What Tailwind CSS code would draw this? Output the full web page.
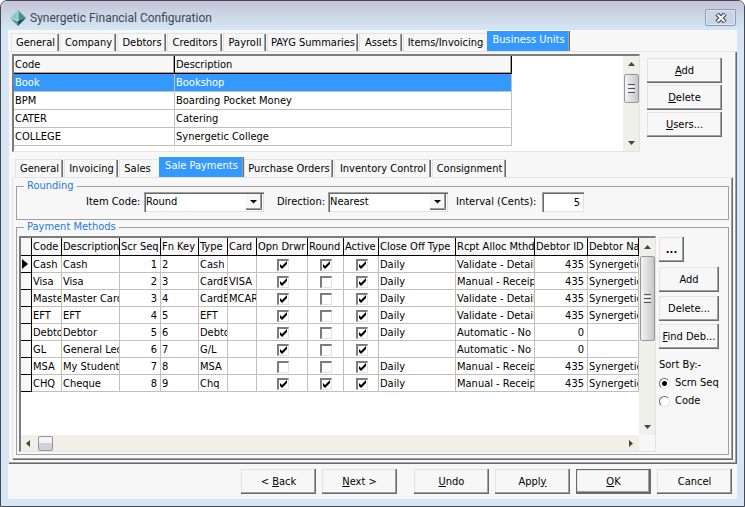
<!DOCTYPE html>
<html lang="en">
<head>
<meta charset="utf-8">
<meta name="viewport" content="width=device-width, initial-scale=1">
<title>Synergetic Financial Configuration</title>
<script src="https://cdn.jsdelivr.net/npm/@tailwindcss/browser@4"></script>
</head>
<body class="bg-white font-['DejaVu_Sans_Condensed','DejaVu_Sans',sans-serif] text-[11px] leading-[16px] text-black">
<div class="flex min-h-screen flex-col overflow-hidden rounded-t-[7px] border border-[#444850] bg-[#d6e6f6] px-[7px] pb-[7px]">

  <header class="-mx-[7px] flex h-[29px] items-center justify-between bg-linear-to-b from-[#c6c2da] via-[#ccd8e4] to-[#d6e6f6] pt-1 pr-2 pl-[9px]">
    <div class="flex items-center gap-1">
      <svg class="size-4" viewBox="0 0 16 16" aria-hidden="true">
        <path d="M8 0 0 8l8 3z" fill="#8fc4c4"/><path d="M8 0l8 8-8 3z" fill="#3f9492"/><path d="M0 8l8 8v-5z" fill="#4b9d9b"/><path d="M16 8l-8 8v-5z" fill="#17504f"/><path d="M8 1v10M1 8l7 3" stroke="#d5ecec" stroke-width=".8" fill="none"/>
      </svg>
      <h1 class="font-[Roboto,'Noto_Sans',sans-serif] text-[12px] text-[#3c4654]">Synergetic Financial Configuration</h1>
    </div>
    <button type="button" aria-label="Close" class="flex h-[17px] w-[31px] items-center justify-center rounded-[2px] border border-[#8b9ab8] bg-[#c9d5e4] shadow-[inset_0_0_0_1px_#dfe8f2]">
      <svg class="h-[10px] w-3" viewBox="0 0 12 10" aria-hidden="true"><path d="M2 1l8 8M10 1l-8 8" stroke="#4b5264" stroke-width="4.500"/><path d="M2.500 1.500l7 7M9.500 1.500l-7 7" stroke="#fff" stroke-width="2"/></svg>
    </button>
  </header>

  <main class="flex flex-1 flex-col bg-[#f7f7f7]">
    <nav role="tablist" aria-label="Configuration" class="flex h-[21px] items-end pl-[3px] [&>button]:h-[18px] [&>button]:border-t [&>button]:border-l [&>button]:border-t-[#e3e3e3] [&>button]:border-l-[#e3e3e3] [&>button]:whitespace-nowrap">
      <button type="button" role="tab" class="mr-px w-12 shadow-[inset_-1px_0_#696969,inset_-2px_0_#a0a0a0]">General</button>
      <button type="button" role="tab" class="mr-px w-14 shadow-[inset_-1px_0_#696969,inset_-2px_0_#a0a0a0]">Company</button>
      <button type="button" role="tab" class="mr-px w-[49px] shadow-[inset_-1px_0_#696969,inset_-2px_0_#a0a0a0]">Debtors</button>
      <button type="button" role="tab" class="mr-px w-[55px] shadow-[inset_-1px_0_#696969,inset_-2px_0_#a0a0a0]">Creditors</button>
      <button type="button" role="tab" class="mr-px w-[43px] shadow-[inset_-1px_0_#696969,inset_-2px_0_#a0a0a0]">Payroll</button>
      <button type="button" role="tab" class="mr-px w-[91px] shadow-[inset_-1px_0_#696969,inset_-2px_0_#a0a0a0]">PAYG Summaries</button>
      <button type="button" role="tab" class="mr-px w-[43px] shadow-[inset_-1px_0_#696969,inset_-2px_0_#a0a0a0]">Assets</button>
      <button type="button" role="tab" class="w-[84px]">Items/Invoicing</button>
      <div class="flex h-5 w-[83px] bg-[#3399ff] shadow-[inset_-1px_0_#696969,inset_-2px_0_#a0a0a0]"><button type="button" role="tab" aria-selected="true" class="w-full pb-0.5 text-white">Business Units</button></div>
    </nav>

    <section class="flex flex-1 flex-col pt-[3px] pr-1 pb-1 pl-1 shadow-[inset_1px_1px_#e3e3e3,inset_-1px_-1px_#696969,inset_-2px_-2px_#a0a0a0,inset_-3px_-3px_#ffffff]">
      <div class="flex gap-[7px] pr-[11px]">
        <div class="flex h-[98px] min-w-0 flex-1 border-t-2 border-r border-b border-l-2 border-t-[#7c7c7c] border-r-[#e3e3e3] border-b-[#e3e3e3] border-l-[#7c7c7c] bg-white">
          <div class="min-w-0 flex-1">
            <table class="w-[498px] table-fixed border-separate border-spacing-0 text-left [&_td]:h-[18px] [&_td]:border-r [&_td]:border-b [&_td]:border-[#c0c0c0] [&_td]:px-px [&_td]:pt-px [&_th]:h-[18px] [&_th]:border-r [&_th]:border-b [&_th]:border-black [&_th]:bg-[#f7f7f7] [&_th]:px-px [&_th]:pt-px [&_th]:font-normal [&_th]:shadow-[inset_-1px_-1px_#a0a0a0]">
              <colgroup><col class="w-[161px]"><col></colgroup>
              <thead><tr><th scope="col">Code</th><th scope="col">Description</th></tr></thead>
              <tbody>
                <tr class="bg-[#3399ff] text-white"><td>Book</td><td>Bookshop</td></tr>
                <tr><td>BPM</td><td>Boarding Pocket Money</td></tr>
                <tr><td>CATER</td><td>Catering</td></tr>
                <tr><td>COLLEGE</td><td>Synergetic College</td></tr>
              </tbody>
            </table>
          </div>
          <div class="flex w-4 flex-col items-center bg-[#f0f0ea] py-1.5" aria-hidden="true">
            <svg class="h-1 w-[7px]" viewBox="0 0 7 4"><path d="M0 4 3.500 0 7 4z" fill="#444"/></svg>
            <div class="mt-2 flex h-[29px] w-[15px] flex-col items-center justify-center gap-px rounded-[2px] border border-[#979797] bg-linear-to-r from-[#f3f3f3] to-[#c6c6cc]">
              <i class="h-px w-[7px] bg-[#555]"></i><i class="h-px w-[7px] bg-white"></i><i class="h-px w-[7px] bg-[#555]"></i><i class="h-px w-[7px] bg-white"></i><i class="h-px w-[7px] bg-[#555]"></i>
            </div>
            <svg class="mt-auto h-1 w-[7px]" viewBox="0 0 7 4"><path d="M0 0h7L3.500 4z" fill="#444"/></svg>
          </div>
        </div>
        <div class="flex w-[75px] flex-col gap-0.5 pt-1 [&>button]:h-[25px] [&>button]:shadow-[inset_-1px_-1px_#696969,inset_-2px_-2px_#a0a0a0,inset_1px_1px_#e3e3e3]">
          <button type="button"><u>A</u>dd</button>
          <button type="button"><u>D</u>elete</button>
          <button type="button"><u>U</u>sers...</button>
        </div>
      </div>

      <nav role="tablist" aria-label="Business unit" class="mt-[5px] flex h-5 items-end pl-[3px] [&>button]:h-[18px] [&>button]:border-t [&>button]:border-l [&>button]:border-t-[#e3e3e3] [&>button]:border-l-[#e3e3e3] [&>button]:whitespace-nowrap">
        <button type="button" role="tab" class="mr-px w-12 shadow-[inset_-1px_0_#696969,inset_-2px_0_#a0a0a0]">General</button>
        <button type="button" role="tab" class="mr-px w-[54px] shadow-[inset_-1px_0_#696969,inset_-2px_0_#a0a0a0]">Invoicing</button>
        <button type="button" role="tab" class="w-10 pr-1">Sales</button>
        <div class="flex h-5 w-[85px] bg-[#3399ff] shadow-[inset_-1px_0_#696969,inset_-2px_0_#a0a0a0]"><button type="button" role="tab" aria-selected="true" class="w-full pb-0.5 text-white">Sale Payments</button></div>
        <button type="button" role="tab" class="mr-px w-[89px] shadow-[inset_-1px_0_#696969,inset_-2px_0_#a0a0a0]">Purchase Orders</button>
        <button type="button" role="tab" class="mr-px w-[97px] shadow-[inset_-1px_0_#696969,inset_-2px_0_#a0a0a0]">Inventory Control</button>
        <button type="button" role="tab" class="w-[74px] shadow-[inset_-1px_0_#696969,inset_-2px_0_#a0a0a0]">Consignment</button>
      </nav>

      <div class="flex flex-1 flex-col pt-[3px] pr-1 pb-[5px] pl-1 shadow-[inset_1px_1px_#e3e3e3,inset_-1px_-1px_#696969,inset_-2px_-2px_#a0a0a0]">
        <fieldset class="min-w-0 border border-[#a0a0a0] pb-[7px] pl-[69px]">
          <legend class="-ml-[62px] px-[3px] leading-[12px] text-[#1e7bd8]">Rounding</legend>
          <div class="flex h-5 items-center">
            <label for="item" class="w-[58px] whitespace-nowrap">Item Code:</label>
            <div class="relative flex h-5 w-[120px]">
              <select id="item" class="w-full appearance-none bg-white pl-0.5 shadow-[inset_1px_1px_#a0a0a0,inset_2px_2px_#696969,inset_-1px_-1px_#e3e3e3]"><option>Round</option></select>
              <svg class="pointer-events-none absolute top-0.5 right-0.5 h-4 w-4" viewBox="0 0 16 16" aria-hidden="true"><path d="M0 0h16v16H0z" fill="#f7f7f7"/><path d="M14.500 0v14.500H0" fill="none" stroke="#a0a0a0"/><path d="M15.500 0v15.500H0" fill="none" stroke="#696969"/><path d="M4 6h7L7.500 9.500z"/></svg>
            </div>
            <label for="dir" class="ml-[13px] w-[51px] whitespace-nowrap">Direction:</label>
            <div class="relative flex h-5 w-[120px]">
              <select id="dir" class="w-full appearance-none bg-white pl-0.5 shadow-[inset_1px_1px_#a0a0a0,inset_2px_2px_#696969,inset_-1px_-1px_#e3e3e3]"><option>Nearest</option></select>
              <svg class="pointer-events-none absolute top-0.5 right-0.5 h-4 w-4" viewBox="0 0 16 16" aria-hidden="true"><path d="M0 0h16v16H0z" fill="#f7f7f7"/><path d="M14.500 0v14.500H0" fill="none" stroke="#a0a0a0"/><path d="M15.500 0v15.500H0" fill="none" stroke="#696969"/><path d="M4 6h7L7.500 9.500z"/></svg>
            </div>
            <label for="interval" class="ml-2 w-[86px] whitespace-nowrap">Interval (Cents):</label>
            <input id="interval" type="text" value="5" class="h-5 w-[42px] bg-white pr-1 text-right shadow-[inset_1px_1px_#a0a0a0,inset_2px_2px_#696969,inset_-1px_-1px_#e3e3e3]">
          </div>
        </fieldset>

        <fieldset class="mt-px min-w-0 flex-1 border border-[#a0a0a0] pt-[3px] pr-[9px] pb-0.5 pl-0.5">
          <legend class="ml-[5px] px-[3px] leading-[12px] text-[#1e7bd8]">Payment Methods</legend>
          <div class="flex gap-[3px]">
            <div class="flex min-w-0 flex-1 flex-col border-t-2 border-r border-b border-l-2 border-t-[#7c7c7c] border-r-[#e3e3e3] border-b-[#e3e3e3] border-l-[#7c7c7c] bg-white">
              <div class="flex min-h-[197px]">
                <div class="min-w-0 flex-1">
                  <table class="w-full table-fixed border-separate border-spacing-0 text-left [&_td]:h-[17px] [&_td]:overflow-hidden [&_td]:border-r [&_td]:border-b [&_td]:border-[#c0c0c0] [&_td]:pt-px [&_td]:pl-px [&_td]:leading-[15px] [&_td]:whitespace-nowrap [&_th]:overflow-hidden [&_th]:border-r [&_th]:border-b [&_th]:border-black [&_th]:bg-[#f7f7f7] [&_th]:pl-px [&_th]:font-normal [&_th]:whitespace-nowrap [&_thead_th]:h-[18px] [&_thead_th]:pt-px">
                    <colgroup><col class="w-[11px]"><col class="w-[30px]"><col class="w-[58px]"><col class="w-[41px]"><col class="w-[38px]"><col class="w-[29px]"><col class="w-[29px]"><col class="w-[51px]"><col class="w-[36px]"><col class="w-[35px]"><col class="w-[77px]"><col class="w-[79px]"><col class="w-[53px]"><col></colgroup>
                    <thead><tr><th></th><th scope="col">Code</th><th scope="col">Description</th><th scope="col">Scr Seq</th><th scope="col">Fn Key</th><th scope="col">Type</th><th scope="col">Card</th><th scope="col">Opn Drwr</th><th scope="col">Round</th><th scope="col">Active</th><th scope="col">Close Off Type</th><th scope="col">Rcpt Alloc Mthd</th><th scope="col">Debtor ID</th><th scope="col">Debtor Name</th></tr></thead>
                    <tbody id="methods"></tbody>
                  </table>
                </div>
                <div class="flex w-4 flex-col items-center bg-[#f0f0ea] pt-[7px] pb-1.5" aria-hidden="true">
                  <svg class="h-1 w-[7px]" viewBox="0 0 7 4"><path d="M0 4 3.500 0 7 4z" fill="#444"/></svg>
                  <div class="mt-[7px] flex h-[85px] w-[15px] flex-col items-center justify-center gap-px rounded-[2px] border border-[#979797] bg-linear-to-r from-[#f3f3f3] to-[#c6c6cc]">
                    <i class="h-px w-[7px] bg-[#555]"></i><i class="h-px w-[7px] bg-white"></i><i class="h-px w-[7px] bg-[#555]"></i><i class="h-px w-[7px] bg-white"></i><i class="h-px w-[7px] bg-[#555]"></i>
                  </div>
                  <svg class="mt-auto h-1 w-[7px]" viewBox="0 0 7 4"><path d="M0 0h7L3.500 4z" fill="#444"/></svg>
                </div>
              </div>
              <div class="flex h-4 bg-[#f7f7f7]" aria-hidden="true">
                <div class="flex flex-1 items-center bg-[#f0f0e8] pr-[6px] pl-[5px]">
                  <svg class="h-[7px] w-1" viewBox="0 0 4 7"><path d="M4 0v7L0 3.500z" fill="#444"/></svg>
                  <div class="ml-2 h-[15px] w-[15px] rounded-[2px] border border-[#979797] bg-linear-to-b from-[#f3f3f3] from-50% to-[#d0d0d6] to-50%"></div>
                  <svg class="ml-auto h-[7px] w-1" viewBox="0 0 4 7"><path d="M0 0v7l4-3.500z" fill="#444"/></svg>
                </div>
                <div class="w-4"></div>
              </div>
            </div>

            <div class="flex w-[60px] flex-col pt-px [&>button]:h-[25px] [&>button]:whitespace-nowrap [&>button]:shadow-[inset_-1px_-1px_#696969,inset_-2px_-2px_#a0a0a0,inset_1px_1px_#e3e3e3]">
              <button type="button" aria-label="More" class="w-[25px] font-bold">...</button>
              <button type="button" class="mt-[5px]">Add</button>
              <button type="button" class="mt-1">Delete...</button>
              <button type="button" class="mt-[3px]"><u>F</u>ind Deb...</button>
              <div role="radiogroup" aria-labelledby="sort" class="pt-2 [&_label]:flex [&_label]:h-[18px] [&_label]:items-center [&_label]:gap-[5px] [&_label]:whitespace-nowrap">
                <p id="sort" class="mb-px">Sort By:-</p>
                <label><input type="radio" name="sort" checked class="size-[11px] appearance-none rounded-full border border-t-[#696969] border-r-[#e3e3e3] border-b-[#e3e3e3] border-l-[#696969] bg-white checked:bg-[radial-gradient(circle,#000_2px,#fff_3px)]">Scrn Seq</label>
                <label><input type="radio" name="sort" class="size-[11px] appearance-none rounded-full border border-t-[#696969] border-r-[#e3e3e3] border-b-[#e3e3e3] border-l-[#696969] bg-white checked:bg-[radial-gradient(circle,#000_2px,#fff_3px)]">Code</label>
              </div>
            </div>
          </div>
        </fieldset>
      </div>
    </section>

    <footer class="flex h-[35px] justify-end gap-1.5 pt-[5px] pr-[5px] [&>button]:h-[25px] [&>button]:w-[75px] [&>button]:shadow-[inset_-1px_-1px_#696969,inset_-2px_-2px_#a0a0a0,inset_1px_1px_#e3e3e3]">
      <button type="button">&lt; <u>B</u>ack</button>
      <button type="button"><u>N</u>ext &gt;</button>
      <button type="button" class="ml-[11px]"><u>U</u>ndo</button>
      <button type="button">Appl<u>y</u></button>
      <button type="button" class="border border-[#696969]"><u>O</u>K</button>
      <button type="button">Cancel</button>
    </footer>
  </main>
</div>

<script>
  // code, description, seq, key, type, card, open drawer, round, active, close off, allocation, debtor id, debtor name
  const methods = [
    ['Cash','Cash',1,2,'Cash','',1,1,1,'Daily','Validate - Detailed',435,'Synergetic'],
    ['Visa','Visa',2,3,'CardEFT','VISA',1,0,1,'Daily','Manual - Receipt',435,'Synergetic'],
    ['MasterCard','Master Card',3,4,'CardEFT','MCARD',1,0,1,'Daily','Validate - Detailed',435,'Synergetic'],
    ['EFT','EFT',4,5,'EFT','',1,0,1,'Daily','Validate - Detailed',435,'Synergetic'],
    ['Debtor','Debtor',5,6,'Debtor','',1,0,1,'Daily','Automatic - No Validation',0,''],
    ['GL','General Ledger',6,7,'G/L','',1,0,1,'','Automatic - No Validation',0,''],
    ['MSA','My Student',7,8,'MSA','',0,0,1,'Daily','Manual - Receipt',435,'Synergetic'],
    ['CHQ','Cheque',8,9,'Chq','',1,1,1,'Daily','Manual - Receipt',435,'Synergetic'],
  ];
  const names = { 6: 'Opn Drwr', 7: 'Round', 8: 'Active' };
  const cell = (v, i, row) => {
    if (i in names) return `<td><span class="relative mx-auto flex size-3"><input type="checkbox" aria-label="${names[i]} ${row[0]}" ${v ? 'checked' : ''} class="peer size-3 appearance-none border-t-2 border-r border-b border-l-2 border-t-[#7c7c7c] border-r-[#e3e3e3] border-b-[#e3e3e3] border-l-[#7c7c7c] bg-white"><svg class="pointer-events-none absolute inset-0 hidden size-3 peer-checked:block" viewBox="0 0 12 12" aria-hidden="true"><path d="M3 5v3l2 2 5-5V2L5 7z"/></svg></span></td>`;
    if (i === 2 || i === 11) return `<td class="pr-[3px] text-right">${v}</td>`;
    return `<td>${v}</td>`;
  };
  document.getElementById('methods').innerHTML = methods.map((row, n) =>
    `<tr><th>${n ? '' : '<svg class="h-[10px] w-[6px]" viewBox="0 0 6 10" aria-label="Current row"><path d="M0 0v10l6-5z"/></svg>'}</th>${row.map((v, i) => cell(v, i, row)).join('')}</tr>`).join('');
</script>
</body>
</html>
